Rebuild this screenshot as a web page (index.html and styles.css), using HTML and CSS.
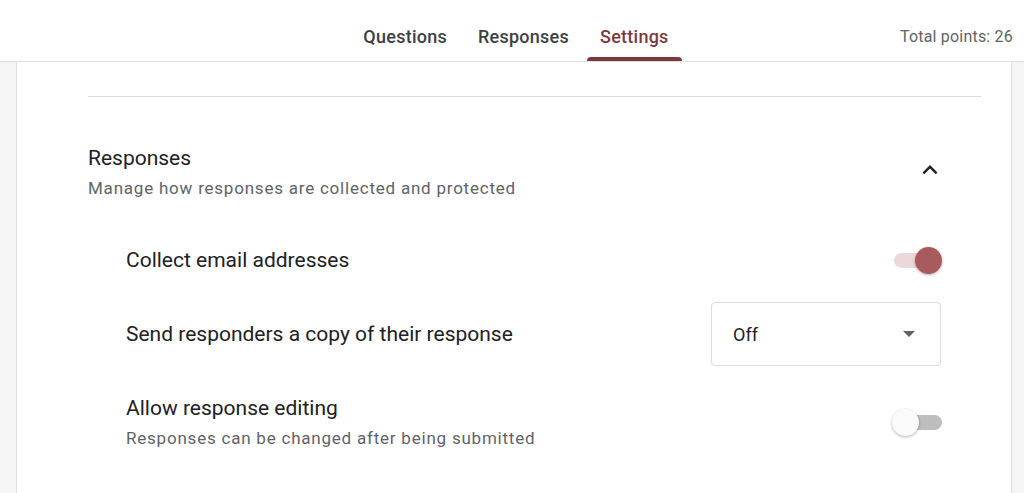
FILE: index.html
```html
<!DOCTYPE html>
<html>
<head>
<meta charset="utf-8">
<link rel="stylesheet" href="styles.css">
</head>
<body>
<header class="topbar">
  <nav class="tabs">
    <div class="tab">Questions</div>
    <div class="tab">Responses</div>
    <div class="tab active">Settings</div>
  </nav>
  <div class="points">Total points: 26</div>
</header>
<main class="page">
  <section class="card">
    <hr class="divider">
    <div class="section-head">
      <div class="section-text">
        <div class="section-title">Responses</div>
        <div class="section-desc">Manage how responses are collected and protected</div>
      </div>
      <svg class="chevron" width="30" height="30" viewBox="0 0 24 24"><path d="M7.41 15.41L12 10.83l4.59 4.58L18 14l-6-6-6 6z" fill="#202124"/></svg>
    </div>
    <div class="rows">
      <div class="row row-email">
        <div class="row-label">Collect email addresses</div>
        <div class="toggle on"><span class="track"></span><span class="thumb"></span></div>
      </div>
      <div class="row row-copy">
        <div class="row-label">Send responders a copy of their response</div>
        <div class="select">
          <span>Off</span>
          <svg width="12" height="6" viewBox="0 0 12 6"><path d="M0 0l6 6 6-6z" fill="#5f6368"/></svg>
        </div>
      </div>
      <div class="row row-edit">
        <div class="row-text">
          <div class="row-label">Allow response editing</div>
          <div class="row-desc">Responses can be changed after being submitted</div>
        </div>
        <div class="toggle off"><span class="track"></span><span class="thumb"></span></div>
      </div>
    </div>
  </section>
</main>
</body>
</html>
```

FILE: styles.css
```css
* { box-sizing: border-box; }
html, body { margin: 0; padding: 0; }
body {
  width: 1024px;
  height: 493px;
  overflow: hidden;
  font-family: Roboto, "Liberation Sans", Arial, sans-serif;
  background: #f5f5f5;
  color: #202124;
}
.topbar {
  height: 62px;
  background: #fff;
  border-bottom: 1px solid #dadce0;
  position: relative;
  display: flex;
  justify-content: center;
}
.tabs {
  display: flex;
  height: 61px;
  margin-left: 8px;
}
.tab {
  padding: 12px 13px 0;
  margin: 0 2.5px;
  font-size: 18px;
  font-weight: 500;
  color: #3c4043;
  display: flex;
  align-items: center;
  position: relative;
  letter-spacing: 0.25px;
}
.tab.active { color: #7a3a3d; }
.tab.active::after {
  content: "";
  position: absolute;
  left: 0; right: 0; bottom: 0;
  height: 4px;
  background: #7a3a3d;
  border-radius: 4px 4px 0 0;
}
.points {
  position: absolute;
  right: 11px;
  top: 27px;
  font-size: 16px;
  letter-spacing: 0.2px;
  color: #5f6368;
}
.page {
  padding: 0 12px 0 16px;
  height: 431px;
}
.card {
  background: #fff;
  border-left: 1px solid #e0e0e0;
  border-right: 1px solid #e0e0e0;
  height: 100%;
  padding: 34px 30px 0 71px;
}
.divider {
  border: 0;
  border-top: 1px solid #dadce0;
  margin: 0;
}
.section-head {
  display: flex;
  justify-content: space-between;
  align-items: flex-start;
  padding-top: 47px;
  padding-right: 36px;
}
.section-title {
  font-size: 21px;
  line-height: 28px;
  color: #202124;
}
.section-desc {
  font-size: 17px;
  line-height: 24px;
  margin-top: 4px;
  color: #5f6368;
  letter-spacing: 0.78px;
}
.chevron { margin-top: 11px; }
.rows {
  padding-left: 38px;
  padding-right: 39px;
}
.row {
  display: flex;
  justify-content: space-between;
  align-items: center;
}
.row-label {
  font-size: 21px;
  line-height: 28px;
  color: #202124;
}
.row-email { height: 28px; margin-top: 46px; }
.row-copy { height: 64px; margin-top: 28px; }
.row-edit { margin-top: 28px; }
.row-desc {
  font-size: 17px;
  line-height: 24px;
  margin-top: 4px;
  color: #5f6368;
  letter-spacing: 0.78px;
}
.toggle {
  position: relative;
  width: 50px;
  height: 28px;
  flex: none;
}
.toggle .track {
  position: absolute;
  left: 2px; right: 0;
  top: 7px;
  height: 15px;
  border-radius: 8px;
}
.toggle .thumb {
  position: absolute;
  top: 1px;
  width: 27px;
  height: 27px;
  border-radius: 50%;
  box-shadow: 0 1px 3px rgba(0,0,0,0.3);
}
.toggle.on .track { background: #ecd8da; right: 4px; }
.toggle.on .thumb { right: 0; background: #a95a5c; }
.toggle.off .track { background: #bdbdbd; }
.toggle.off .thumb { left: 0; background: #fafafa; }
.select {
  width: 230px;
  height: 64px;
  margin-right: 1px;
  border: 1px solid #dadce0;
  border-radius: 4px;
  display: flex;
  align-items: center;
  justify-content: space-between;
  padding: 0 25px 0 21px;
  font-size: 18px;
  color: #202124;
}
```
